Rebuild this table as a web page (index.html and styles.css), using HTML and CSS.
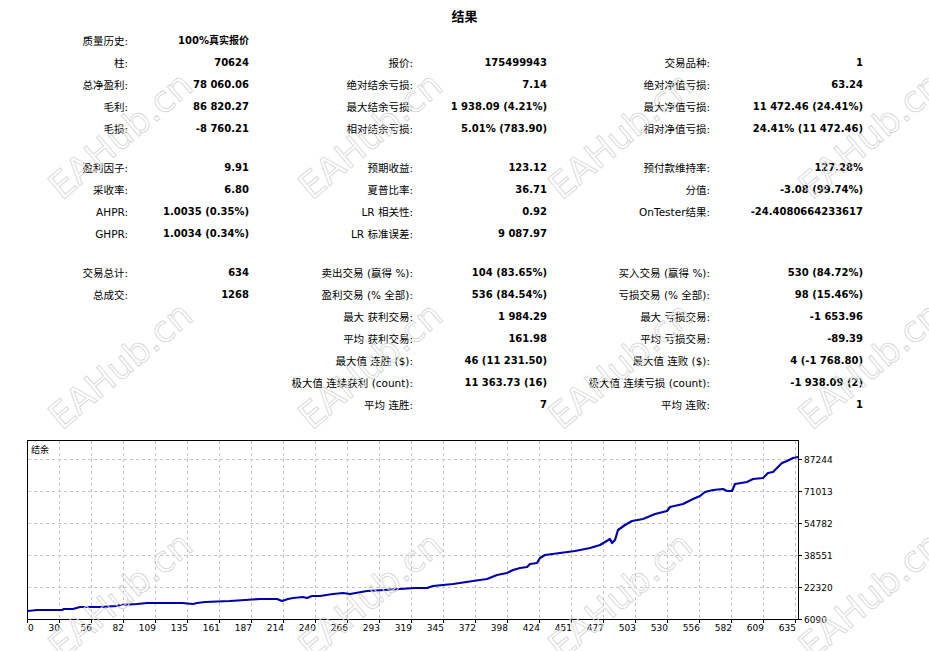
FILE: index.html
```html
<!DOCTYPE html>
<html lang="zh">
<head>
<meta charset="utf-8">
<title>结果</title>
<link rel="stylesheet" href="styles.css">
</head>
<body>
<div class="page">
  <div class="title">结果</div>

  <div class="section first">
    <div class="lbl">质量历史:</div><div class="val">100%真实报价</div><div></div><div></div><div></div><div></div>
    <div class="lbl">柱:</div><div class="val">70624</div><div class="lbl">报价:</div><div class="val">175499943</div><div class="lbl">交易品种:</div><div class="val">1</div>
    <div class="lbl">总净盈利:</div><div class="val">78 060.06</div><div class="lbl">绝对结余亏损:</div><div class="val">7.14</div><div class="lbl">绝对净值亏损:</div><div class="val">63.24</div>
    <div class="lbl">毛利:</div><div class="val">86 820.27</div><div class="lbl">最大结余亏损:</div><div class="val">1 938.09 (4.21%)</div><div class="lbl">最大净值亏损:</div><div class="val">11 472.46 (24.41%)</div>
    <div class="lbl">毛损:</div><div class="val">-8 760.21</div><div class="lbl">相对结余亏损:</div><div class="val">5.01% (783.90)</div><div class="lbl">相对净值亏损:</div><div class="val">24.41% (11 472.46)</div>
  </div>

  <div class="section">
    <div class="lbl">盈利因子:</div><div class="val">9.91</div><div class="lbl">预期收益:</div><div class="val">123.12</div><div class="lbl">预付款维持率:</div><div class="val">127.28%</div>
    <div class="lbl">采收率:</div><div class="val">6.80</div><div class="lbl">夏普比率:</div><div class="val">36.71</div><div class="lbl">分值:</div><div class="val">-3.08 (99.74%)</div>
    <div class="lbl">AHPR:</div><div class="val">1.0035 (0.35%)</div><div class="lbl">LR 相关性:</div><div class="val">0.92</div><div class="lbl">OnTester结果:</div><div class="val">-24.4080664233617</div>
    <div class="lbl">GHPR:</div><div class="val">1.0034 (0.34%)</div><div class="lbl">LR 标准误差:</div><div class="val">9 087.97</div><div></div><div></div>
  </div>

  <div class="section">
    <div class="lbl">交易总计:</div><div class="val">634</div><div class="lbl">卖出交易 (赢得 %):</div><div class="val">104 (83.65%)</div><div class="lbl">买入交易 (赢得 %):</div><div class="val">530 (84.72%)</div>
    <div class="lbl">总成交:</div><div class="val">1268</div><div class="lbl">盈利交易 (% 全部):</div><div class="val">536 (84.54%)</div><div class="lbl">亏损交易 (% 全部):</div><div class="val">98 (15.46%)</div>
    <div></div><div></div><div class="lbl">最大 获利交易:</div><div class="val">1 984.29</div><div class="lbl">最大 亏损交易:</div><div class="val">-1 653.96</div>
    <div></div><div></div><div class="lbl">平均 获利交易:</div><div class="val">161.98</div><div class="lbl">平均 亏损交易:</div><div class="val">-89.39</div>
    <div></div><div></div><div class="lbl">最大值 连胜 ($):</div><div class="val">46 (11 231.50)</div><div class="lbl">最大值 连败 ($):</div><div class="val">4 (-1 768.80)</div>
    <div></div><div></div><div class="lbl">极大值 连续获利 (count):</div><div class="val">11 363.73 (16)</div><div class="lbl">极大值 连续亏损 (count):</div><div class="val">-1 938.09 (2)</div>
    <div></div><div></div><div class="lbl">平均 连胜:</div><div class="val">7</div><div class="lbl">平均 连败:</div><div class="val">1</div>
  </div>

  <svg class="chart" width="929" height="235" viewBox="0 416 929 235" xmlns="http://www.w3.org/2000/svg">
    <g class="grid">
      <line x1="28" y1="459.5" x2="798" y2="459.5"/>
      <line x1="28" y1="491.5" x2="798" y2="491.5"/>
      <line x1="28" y1="523.5" x2="798" y2="523.5"/>
      <line x1="28" y1="555.5" x2="798" y2="555.5"/>
      <line x1="28" y1="587.5" x2="798" y2="587.5"/>
      <line x1="59.5" y1="441" x2="59.5" y2="619"/>
      <line x1="91.5" y1="441" x2="91.5" y2="619"/>
      <line x1="123.5" y1="441" x2="123.5" y2="619"/>
      <line x1="155.5" y1="441" x2="155.5" y2="619"/>
      <line x1="187.5" y1="441" x2="187.5" y2="619"/>
      <line x1="219.5" y1="441" x2="219.5" y2="619"/>
      <line x1="251.5" y1="441" x2="251.5" y2="619"/>
      <line x1="283.5" y1="441" x2="283.5" y2="619"/>
      <line x1="315.5" y1="441" x2="315.5" y2="619"/>
      <line x1="347.5" y1="441" x2="347.5" y2="619"/>
      <line x1="379.5" y1="441" x2="379.5" y2="619"/>
      <line x1="411.5" y1="441" x2="411.5" y2="619"/>
      <line x1="443.5" y1="441" x2="443.5" y2="619"/>
      <line x1="475.5" y1="441" x2="475.5" y2="619"/>
      <line x1="507.5" y1="441" x2="507.5" y2="619"/>
      <line x1="539.5" y1="441" x2="539.5" y2="619"/>
      <line x1="571.5" y1="441" x2="571.5" y2="619"/>
      <line x1="603.5" y1="441" x2="603.5" y2="619"/>
      <line x1="635.5" y1="441" x2="635.5" y2="619"/>
      <line x1="667.5" y1="441" x2="667.5" y2="619"/>
      <line x1="699.5" y1="441" x2="699.5" y2="619"/>
      <line x1="731.5" y1="441" x2="731.5" y2="619"/>
      <line x1="763.5" y1="441" x2="763.5" y2="619"/>
      <line x1="795.5" y1="441" x2="795.5" y2="619"/>
    </g>
    <g class="ticks">
      <line x1="798" y1="459.5" x2="802" y2="459.5"/>
      <line x1="798" y1="491.5" x2="802" y2="491.5"/>
      <line x1="798" y1="523.5" x2="802" y2="523.5"/>
      <line x1="798" y1="555.5" x2="802" y2="555.5"/>
      <line x1="798" y1="587.5" x2="802" y2="587.5"/>
      <line x1="798" y1="619.5" x2="802" y2="619.5"/>
      <line x1="27.5" y1="619" x2="27.5" y2="623"/>
      <line x1="59.5" y1="619" x2="59.5" y2="623"/>
      <line x1="91.5" y1="619" x2="91.5" y2="623"/>
      <line x1="123.5" y1="619" x2="123.5" y2="623"/>
      <line x1="155.5" y1="619" x2="155.5" y2="623"/>
      <line x1="187.5" y1="619" x2="187.5" y2="623"/>
      <line x1="219.5" y1="619" x2="219.5" y2="623"/>
      <line x1="251.5" y1="619" x2="251.5" y2="623"/>
      <line x1="283.5" y1="619" x2="283.5" y2="623"/>
      <line x1="315.5" y1="619" x2="315.5" y2="623"/>
      <line x1="347.5" y1="619" x2="347.5" y2="623"/>
      <line x1="379.5" y1="619" x2="379.5" y2="623"/>
      <line x1="411.5" y1="619" x2="411.5" y2="623"/>
      <line x1="443.5" y1="619" x2="443.5" y2="623"/>
      <line x1="475.5" y1="619" x2="475.5" y2="623"/>
      <line x1="507.5" y1="619" x2="507.5" y2="623"/>
      <line x1="539.5" y1="619" x2="539.5" y2="623"/>
      <line x1="571.5" y1="619" x2="571.5" y2="623"/>
      <line x1="603.5" y1="619" x2="603.5" y2="623"/>
      <line x1="635.5" y1="619" x2="635.5" y2="623"/>
      <line x1="667.5" y1="619" x2="667.5" y2="623"/>
      <line x1="699.5" y1="619" x2="699.5" y2="623"/>
      <line x1="731.5" y1="619" x2="731.5" y2="623"/>
      <line x1="763.5" y1="619" x2="763.5" y2="623"/>
      <line x1="795.5" y1="619" x2="795.5" y2="623"/>
    </g>
    <rect class="frame" x="27.5" y="440.5" width="771" height="179"/>
    <polyline class="curve" points="28,611 37,610 62,610 64,609 73,609 80,607 100,607 117,606 120,605 137,604 147,603 182,603 193,604 197,603 205,602 230,601 260,599 277,599 282,601 288,599 293,598 303,597 307,598 312,596 320,596 333,594 343,593 350,594 367,591 384,590 400,589 415,588 427,588 433,586 453,584 473,581 487,579 497,575 507,573 513,570 520,568 527,567 530,564 537,563 540,558 545,555 560,553 575,551 590,548 600,545 605,542 610,539 612,543 615,540 618,530 625,525 632,521 643,519 655,514 667,511 670,507 683,504 693,499 700,496 705,492 713,490 723,489 727,491 732,491 735,484 747,482 753,479 763,478 768,473 773,472 782,463 787,461 793,458 798,457"/>
    <text class="cap" x="31" y="453">结余</text>
    <g class="ylab">
      <text x="804" y="463">87244</text>
      <text x="804" y="495">71013</text>
      <text x="804" y="527">54782</text>
      <text x="804" y="559">38551</text>
      <text x="804" y="591">22320</text>
      <text x="804" y="623">6090</text>
    </g>
    <g class="xlab">
      <text x="28" y="631" class="start">0</text>
      <text x="60" y="631">30</text>
      <text x="92" y="631">56</text>
      <text x="124" y="631">82</text>
      <text x="156" y="631">109</text>
      <text x="188" y="631">135</text>
      <text x="220" y="631">161</text>
      <text x="252" y="631">187</text>
      <text x="284" y="631">214</text>
      <text x="316" y="631">240</text>
      <text x="348" y="631">266</text>
      <text x="380" y="631">293</text>
      <text x="412" y="631">319</text>
      <text x="444" y="631">345</text>
      <text x="476" y="631">372</text>
      <text x="508" y="631">398</text>
      <text x="540" y="631">424</text>
      <text x="572" y="631">451</text>
      <text x="604" y="631">477</text>
      <text x="636" y="631">503</text>
      <text x="668" y="631">530</text>
      <text x="700" y="631">556</text>
      <text x="732" y="631">582</text>
      <text x="764" y="631">609</text>
      <text x="796" y="631">635</text>
    </g>
  </svg>

  <div class="watermarks" aria-hidden="true">
    <div class="wm-grid">
      <span class="wm">EAHub.cn</span><span class="wm">EAHub.cn</span><span class="wm">EAHub.cn</span><span class="wm">EAHub.cn</span>
      <span class="wm">EAHub.cn</span><span class="wm">EAHub.cn</span><span class="wm">EAHub.cn</span><span class="wm">EAHub.cn</span>
      <span class="wm">EAHub.cn</span><span class="wm">EAHub.cn</span><span class="wm">EAHub.cn</span><span class="wm">EAHub.cn</span>
    </div>
  </div>
</div>
</body>
</html>
```

FILE: styles.css
```css
html, body {
  margin: 0;
  padding: 0;
  background: #ffffff;
}

body {
  width: 929px;
  height: 651px;
  overflow: hidden;
  font-family: "DejaVu Sans", "Noto Sans CJK SC", sans-serif;
  color: #000000;
}

.page {
  position: relative;
  width: 929px;
  height: 651px;
  overflow: hidden;
}

.title {
  height: 30px;
  box-sizing: border-box;
  padding-top: 9px;
  line-height: 16px;
  text-align: center;
  font-weight: bold;
  font-size: 13px;
}

.section {
  display: grid;
  grid-template-columns: 128px 121px 164px 134px 163px 153px;
  grid-auto-rows: 22px;
  line-height: 22px;
  margin-top: 17px;
  white-space: nowrap;
}

.section.first {
  margin-top: 0;
}

.lbl {
  text-align: right;
  font-size: 10.5px;
}

.val {
  text-align: right;
  font-weight: bold;
  font-size: 10px;
}

.chart {
  display: block;
}

.chart .grid line {
  stroke: #c4c4c4;
  stroke-width: 1;
  stroke-dasharray: 3 3;
}

.chart .ticks line {
  stroke: #000000;
  stroke-width: 1;
}

.chart .frame {
  fill: none;
  stroke: #000000;
  stroke-width: 1;
}

.chart .curve {
  fill: none;
  stroke: #0000a8;
  stroke-width: 2.2;
  stroke-linejoin: round;
}

.chart text {
  font-family: "DejaVu Sans", "Noto Sans CJK SC", sans-serif;
  font-size: 9px;
  fill: #000000;
}

.chart .xlab text {
  text-anchor: end;
}

.chart .xlab text.start {
  text-anchor: start;
}

.watermarks {
  position: absolute;
  top: 0;
  left: 0;
  width: 929px;
  height: 651px;
  overflow: hidden;
  pointer-events: none;
}

.wm-grid {
  display: grid;
  grid-template-columns: repeat(4, 250px);
  grid-template-rows: repeat(3, 230px);
  margin-top: 20px;
  margin-left: -5px;
}

.wm {
  display: flex;
  align-items: center;
  justify-content: center;
  transform: rotate(-40deg);
  font-family: "DejaVu Sans", sans-serif;
  font-size: 36px;
  color: transparent;
  -webkit-text-stroke: 0.9px #d8d8d8;
  white-space: nowrap;
}
```
